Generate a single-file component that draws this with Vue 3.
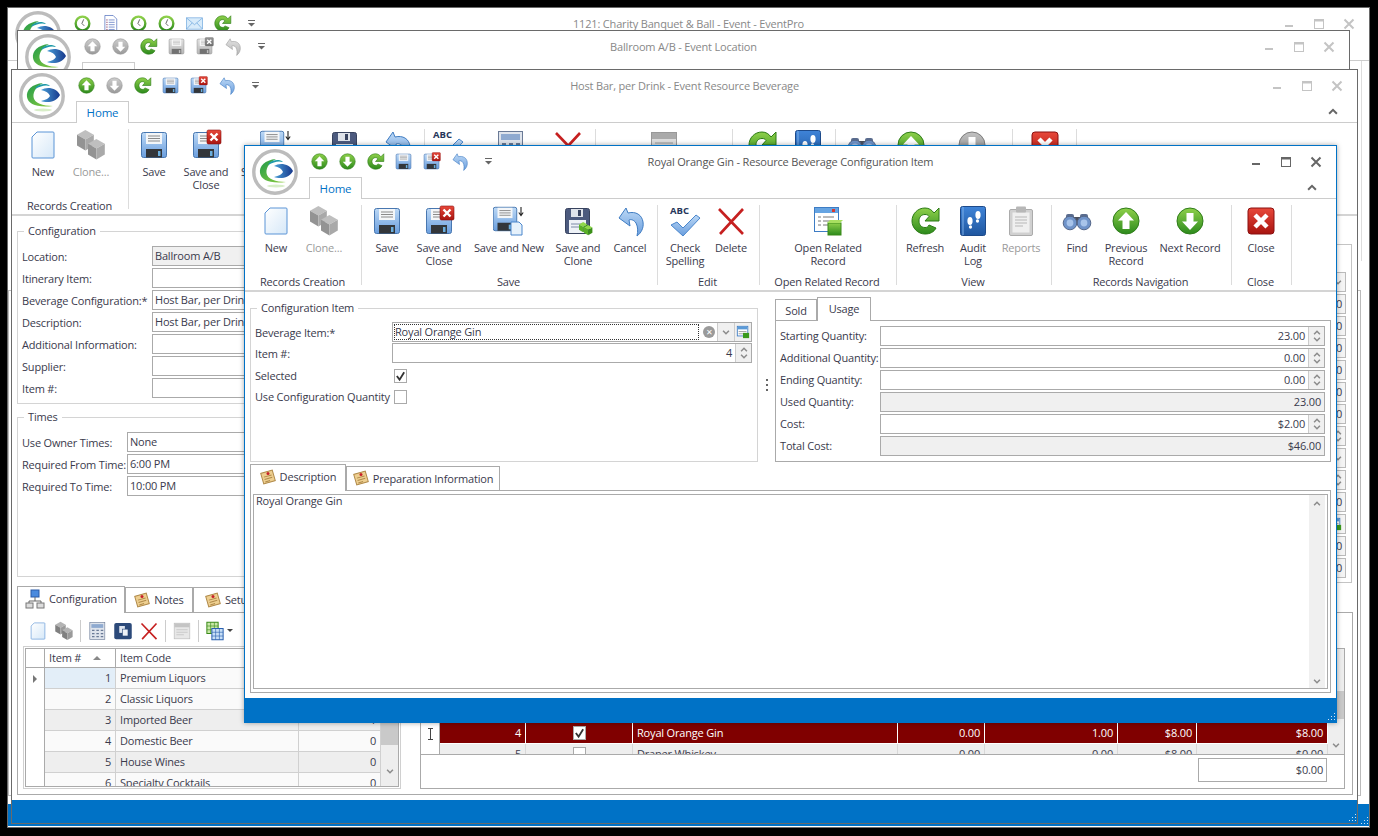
<script setup>
const ribbonFront = [
  { label: 'Records Creation', w: 112, items: [
    { icon: 'new', lines: ['New'], w: 52 },
    { icon: 'clone', lines: ['Clone...'], w: 44, off: true },
  ] },
  { label: 'Save', w: 296, items: [
    { icon: 'save', lines: ['Save'], w: 50 },
    { icon: 'saveClose', lines: ['Save and', 'Close'], w: 54 },
    { icon: 'saveNew', lines: ['Save and New'], w: 86 },
    { icon: 'saveClone', lines: ['Save and', 'Clone'], w: 52 },
    { icon: 'cancel', lines: ['Cancel'], w: 52 },
  ] },
  { label: 'Edit', w: 102, items: [
    { icon: 'spell', lines: ['Check', 'Spelling'], w: 54 },
    { icon: 'delete', lines: ['Delete'], w: 38 },
  ] },
  { label: 'Open Related Record', w: 137, items: [
    { icon: 'related', lines: ['Open Related', 'Record'], w: 136 },
  ] },
  { label: 'View', w: 155, items: [
    { icon: 'refresh', lines: ['Refresh'], w: 56 },
    { icon: 'audit', lines: ['Audit', 'Log'], w: 40 },
    { icon: 'reports', lines: ['Reports'], w: 56, off: true },
  ] },
  { label: 'Records Navigation', w: 180, items: [
    { icon: 'find', lines: ['Find'], w: 50 },
    { icon: 'up', lines: ['Previous', 'Record'], w: 48 },
    { icon: 'down', lines: ['Next Record'], w: 80 },
  ] },
  { label: 'Close', w: 60, items: [
    { icon: 'closeBig', lines: ['Close'], w: 58 },
  ] },
]

const ribbonBeverage = [
  { label: 'Records Creation', w: 112, items: [
    { icon: 'new', lines: ['New'], w: 52 },
    { icon: 'clone', lines: ['Clone...'], w: 44, off: true },
  ] },
  { label: 'Save', w: 296, items: [
    { icon: 'save', lines: ['Save'], w: 50 },
    { icon: 'saveClose', lines: ['Save and', 'Close'], w: 54 },
    { icon: 'saveNew', lines: ['Save and New'], w: 86 },
    { icon: 'saveClone', lines: ['Save and', 'Clone'], w: 52 },
    { icon: 'cancel', lines: ['Cancel'], w: 52 },
  ] },
  { label: 'Edit', w: 171, items: [
    { icon: 'spell', lines: ['Check', 'Spelling'], w: 46 },
    { icon: 'calc', lines: ['Calculate'], w: 78 },
    { icon: 'delete', lines: ['Delete'], w: 38 },
  ] },
  { label: 'Open Related Record', w: 137, items: [
    { icon: 'form', lines: ['Open Related', 'Record'], w: 136 },
  ] },
  { label: 'View', w: 103, items: [
    { icon: 'refresh', lines: ['Refresh'], w: 58 },
    { icon: 'audit', lines: ['Audit', 'Log'], w: 34 },
  ] },
  { label: 'Records Navigation', w: 177, items: [
    { icon: 'find', lines: ['Find'], w: 52 },
    { icon: 'up', lines: ['Previous', 'Record'], w: 46 },
    { icon: 'down', lines: ['Next Record'], w: 76, off: true },
  ] },
  { label: 'Close', w: 64, items: [
    { icon: 'closeBig', lines: ['Close'], w: 64 },
  ] },
]

const windows = [
  {
    id: 'w1', title: '1121: Charity Banquet & Ball - Event - EventPro',
    qat: [{ icon: 'clock' }, { icon: 'doclist' }, { icon: 'clock' }, { icon: 'clock' }, { icon: 'mail' }, { icon: 'refresh' }],
  },
  {
    id: 'w2', title: 'Ballroom A/B - Event Location',
    qat: [{ icon: 'up', off: true }, { icon: 'down', off: true }, { icon: 'refresh' }, { icon: 'save', off: true }, { icon: 'saveClose', off: true }, { icon: 'cancel', off: true }],
  },
  {
    id: 'w3', title: 'Host Bar, per Drink - Event Resource Beverage', ribbon: ribbonBeverage,
    qat: [{ icon: 'up' }, { icon: 'down', off: true }, { icon: 'refresh' }, { icon: 'save' }, { icon: 'saveClose' }, { icon: 'cancel' }],
  },
  {
    id: 'w4', title: 'Royal Orange Gin - Resource Beverage Configuration Item', ribbon: ribbonFront,
    qat: [{ icon: 'up' }, { icon: 'down' }, { icon: 'refresh' }, { icon: 'save' }, { icon: 'saveClose' }, { icon: 'cancel' }],
  },
]

const configRows = [
  { label: 'Location:', value: 'Ballroom A/B', readonly: true },
  { label: 'Itinerary Item:', value: '' },
  { label: 'Beverage Configuration:*', value: 'Host Bar, per Drink' },
  { label: 'Description:', value: 'Host Bar, per Drink' },
  { label: 'Additional Information:', value: '' },
  { label: 'Supplier:', value: '' },
  { label: 'Item #:', value: '' },
]
const timeRows = [
  { label: 'Use Owner Times:', value: 'None' },
  { label: 'Required From Time:', value: '6:00 PM' },
  { label: 'Required To Time:', value: '10:00 PM' },
]
const sideRows = ['chevron', '0', '0', '0', '0', '0', '0', 'spin', 'chevron', 'spin', '0', 'pick', '0', '0']

const configGrid = [
  { n: 1, code: 'Premium Liquors', qty: 0, current: true },
  { n: 2, code: 'Classic Liquors', qty: 0 },
  { n: 3, code: 'Imported Beer', qty: 1, alt: true },
  { n: 4, code: 'Domestic Beer', qty: 0 },
  { n: 5, code: 'House Wines', qty: 0, alt: true },
  { n: 6, code: 'Specialty Cocktails', qty: 0 },
]
const itemGrid = [
  { n: 4, on: true, name: 'Royal Orange Gin', a: '0.00', b: '1.00', c: '$8.00', d: '$8.00', picked: true },
  { n: 5, on: false, name: 'Draper Whiskey', a: '0.00', b: '0.00', c: '$8.00', d: '$0.00' },
]
const toolbar = ['new', 'clone', '|', 'calc', 'copy', 'delete', '|', 'form', '|', 'views']

const usageRows = [
  { label: 'Starting Quantity:', value: '23.00', spin: true },
  { label: 'Additional Quantity:', value: '0.00', spin: true },
  { label: 'Ending Quantity:', value: '0.00', spin: true },
  { label: 'Used Quantity:', value: '23.00' },
  { label: 'Cost:', value: '$2.00', spin: true },
  { label: 'Total Cost:', value: '$46.00' },
]
</script>

<template>
  <div class="desktop">
    <svg class="sprite" width="0" height="0">
      <defs>
        <linearGradient id="gGreen" x1="0" y1="0" x2="0" y2="1"><stop offset="0" stop-color="#8ed04a" /><stop offset="1" stop-color="#2c8a1c" /></linearGradient>
        <linearGradient id="gBlue" x1="0" y1="0" x2="0" y2="1"><stop offset="0" stop-color="#bcd8f5" /><stop offset="1" stop-color="#6a9ede" /></linearGradient>
        <linearGradient id="gBook" x1="0" y1="0" x2="0" y2="1"><stop offset="0" stop-color="#3f84d8" /><stop offset="1" stop-color="#1f569f" /></linearGradient>
        <linearGradient id="gRed" x1="0" y1="0" x2="0" y2="1"><stop offset="0" stop-color="#e8483a" /><stop offset="1" stop-color="#a81410" /></linearGradient>
        <linearGradient id="gSky" x1="0" y1="0" x2="1" y2="1"><stop offset="0" stop-color="#ffffff" /><stop offset="1" stop-color="#d6e8f8" /></linearGradient>
        <linearGradient id="gLogo" x1="0" y1="0" x2="1" y2="1"><stop offset="0" stop-color="#1f9a4a" /><stop offset="1" stop-color="#8fce3e" /></linearGradient>
        <linearGradient id="gEye" x1="0" y1="0" x2="1" y2="0"><stop offset="0" stop-color="#4aa0d8" /><stop offset="1" stop-color="#17388c" /></linearGradient>
        <g id="cubeGray">
          <polygon points="7,0 14,4 7,8 0,4" fill="#b4b4b4" />
          <polygon points="0,4 7,8 7,17 0,13" fill="#808080" />
          <polygon points="7,8 14,4 14,13 7,17" fill="#9a9a9a" />
        </g>
        <g id="cubeGreen">
          <polygon points="7,0 14,4 7,8 0,4" fill="#8fd84a" />
          <polygon points="0,4 7,8 7,17 0,13" fill="#5bb028" />
          <polygon points="7,8 14,4 14,13 7,17" fill="#3a8f18" />
        </g>
      </defs>
      <symbol id="logo" viewBox="0 0 46 46">
        <circle cx="23" cy="23" r="21.2" fill="#fff" stroke="#bcbcbc" stroke-width="3.4" />
        <path d="M24 10C13 11 7 17 8 24c1 7 10 11 26 9-10 0-19-3-19.500-9C14 18 18 13 24 10z" fill="url(#gLogo)" />
        <path d="M17 14c4-3.500 11-4 14-1-5-1.500-9 0-15 3z" fill="#1f9aa8" />
        <path d="M22 17c6-4 16-2 19 5-4 8-14 8-19 6 5-1 8-3 9-5-1-3-4-5-9-6z" fill="url(#gEye)" />
        <ellipse cx="24" cy="37" rx="9" ry="1.500" fill="#d8eec8" />
      </symbol>
      <symbol id="up" viewBox="0 0 32 32">
        <circle cx="16" cy="16" r="13" fill="url(#gGreen)" stroke="#2f7d1a" />
        <path d="M16 7l8 8.500h-4.500V24h-7v-8.500H8z" fill="#fff" />
      </symbol>
      <symbol id="down" viewBox="0 0 32 32">
        <circle cx="16" cy="16" r="13" fill="url(#gGreen)" stroke="#2f7d1a" />
        <path d="M16 25l8-8.500h-4.500V8h-7v8.500H8z" fill="#fff" />
      </symbol>
      <symbol id="new" viewBox="0 0 32 32">
        <path d="M10 3h16a1 1 0 0 1 1 1v24a1 1 0 0 1-1 1H6a1 1 0 0 1-1-1V8z" fill="url(#gSky)" stroke="#5a94d6" />
      </symbol>
      <symbol id="clone" viewBox="0 0 32 32">
        <use href="#cubeGray" transform="translate(2 1) scale(1.2)" />
        <use href="#cubeGray" transform="translate(13 10) scale(1.2)" />
      </symbol>
      <symbol id="floppy" viewBox="0 0 32 32">
        <rect x="3.500" y="3.500" width="25" height="25" rx="2" fill="url(#gBlue)" stroke="#4877b0" />
        <rect x="8" y="4" width="16" height="11" fill="#f4f6f8" />
        <path d="M10 7h12M10 9.500h12M10 12h12" stroke="#8a8a8a" />
        <rect x="8" y="20" width="16" height="8.500" fill="#33363a" />
        <rect x="20" y="22" width="2.500" height="5" fill="#6aaede" />
      </symbol>
      <symbol id="save" viewBox="0 0 32 32"><use href="#floppy" width="32" height="32" /></symbol>
      <symbol id="saveClose" viewBox="0 0 32 32">
        <use href="#floppy" width="32" height="32" />
        <rect x="17" y="1" width="14" height="14" rx="1.500" fill="url(#gRed)" stroke="#8a1010" stroke-width=".6" />
        <path d="M20.500 4.500l7 7m0-7l-7 7" stroke="#fff" stroke-width="2.400" />
      </symbol>
      <symbol id="saveNew" viewBox="0 0 32 32">
        <use href="#floppy" x="-3" y="-1" width="30" height="30" />
        <path d="M18 17h8l3 3v10H18z" fill="#e6f1fb" stroke="#4a86cc" />
        <path d="M28 2v8m-2.200-2.500l2.200 3 2.200-3" fill="none" stroke="#222" stroke-width="1.100" />
      </symbol>
      <symbol id="saveClone" viewBox="0 0 32 32">
        <rect x="3.500" y="3.500" width="24" height="25" rx="2" fill="#4c5a7e" stroke="#38435f" />
        <rect x="9" y="4" width="12" height="8" fill="#dfe3ea" />
        <rect x="16" y="5" width="3" height="6" fill="#38435f" />
        <rect x="7" y="15" width="17" height="13" fill="#eef2f7" />
        <path d="M9 19h12M9 22h9" stroke="#7a8aa6" />
        <use href="#cubeGreen" transform="translate(17 17) scale(.6)" />
        <use href="#cubeGreen" transform="translate(22 20) scale(.6)" />
      </symbol>
      <symbol id="cancel" viewBox="0 0 32 32">
        <path d="M5 13l7-10 2 5c8-2 14 2 15 9 1 6-2 11-6 14 1-5 1-9-1-13-2-3-5-4-7-3l1 6z" fill="url(#gBlue)" stroke="#3f7cc2" stroke-linejoin="round" />
      </symbol>
      <symbol id="spell" viewBox="0 0 32 32">
        <text x="1" y="9" font-family="'Open Sans', sans-serif" font-weight="700" font-size="9.500" letter-spacing="0" fill="#26365a">ABC</text>
        <path d="M2 20l6-3 6 6L27 10l4 3-17 18z" fill="url(#gBlue)" stroke="#4a86cc" />
      </symbol>
      <symbol id="delete" viewBox="0 0 32 32">
        <path d="M4 4l24 25M28 4L5 29" stroke="#c62020" stroke-width="2.600" fill="none" />
      </symbol>
      <symbol id="related" viewBox="0 0 32 32">
        <rect x="2.500" y="2.500" width="24" height="24" fill="#fff" stroke="#3d7cc4" />
        <rect x="3" y="3" width="23" height="5" fill="#66a4e2" />
        <rect x="20" y="4" width="3" height="3" fill="#d83a30" />
        <path d="M6 12h3m2 0h11M6 16h3m2 0h8M6 20h3m2 0h6" stroke="#777" />
        <rect x="16" y="18" width="13" height="12" fill="url(#gGreen)" stroke="#3a8a18" />
        <path d="M16 18l3-3h13l-3 3z" transform="translate(-1 0)" fill="#a8e060" />
      </symbol>
      <symbol id="form" viewBox="0 0 32 32">
        <rect x="3.500" y="3.500" width="25" height="25" fill="#ddd" stroke="#999" />
        <rect x="4" y="4" width="24" height="6" fill="#aaa" />
        <path d="M7 14h18M7 18h18M7 22h12" stroke="#999" />
      </symbol>
      <symbol id="calc" viewBox="0 0 32 32">
        <rect x="4.500" y="2.500" width="24" height="27" fill="#dfe4ec" stroke="#6a7a96" />
        <rect x="7" y="5" width="19" height="6" fill="#8faad0" />
        <path d="M8 15h4m3 0h4m3 0h4M8 20h4m3 0h4m3 0h4M8 25h4m3 0h4m3 0h4" stroke="#6a7a96" stroke-width="2" />
      </symbol>
      <symbol id="refresh" viewBox="0 0 32 32">
        <path d="M16 3C8.500 3 3 9 3 16s6 13 13 13c5 0 9-2 11-6l-7-3c-1 2-2 2.500-4 2.500-3.500 0-6-2.500-6-6.500s2.500-6.500 6-6.500c2 0 3 .5 4 2l-4 4.500h14V3l-5 5c-2-3-5-5-9-5z" fill="url(#gGreen)" stroke="#2a7a14" />
      </symbol>
      <symbol id="audit" viewBox="0 0 32 32">
        <rect x="3.500" y="1.500" width="25" height="29" rx="2" fill="url(#gBook)" stroke="#1d4a8a" />
        <path d="M6 2v28" stroke="#7fb0e8" />
        <ellipse cx="13" cy="16" rx="2.600" ry="4" fill="#fff" />
        <ellipse cx="13.500" cy="22" rx="1.600" ry="1.700" fill="#fff" />
        <ellipse cx="21" cy="10" rx="2.600" ry="4" fill="#fff" />
        <ellipse cx="20.500" cy="16" rx="1.600" ry="1.700" fill="#fff" />
      </symbol>
      <symbol id="reports" viewBox="0 0 32 32">
        <rect x="4.500" y="4.500" width="23" height="26" rx="1.500" fill="#c8c8c8" stroke="#9c9c9c" />
        <rect x="7.500" y="7.500" width="17" height="20" fill="#ececec" />
        <rect x="11" y="1.500" width="10" height="6" rx="1" fill="#aaa" />
        <path d="M10 12h12M10 15h12M10 18h12M10 21h8" stroke="#aaa" />
      </symbol>
      <symbol id="find" viewBox="0 0 32 32">
        <rect x="5" y="9" width="8" height="6" rx="2" fill="#5a6c8e" />
        <rect x="19" y="9" width="8" height="6" rx="2" fill="#5a6c8e" />
        <rect x="12" y="12" width="8" height="8" fill="#4a4f5c" />
        <circle cx="9" cy="18" r="6.800" fill="#6f93c9" stroke="#56688a" />
        <circle cx="23" cy="18" r="6.800" fill="#6f93c9" stroke="#56688a" />
        <circle cx="9" cy="18" r="3.400" fill="#a8c4ea" />
        <circle cx="23" cy="18" r="3.400" fill="#a8c4ea" />
      </symbol>
      <symbol id="closeBig" viewBox="0 0 32 32">
        <rect x="3" y="3" width="26" height="26" rx="3" fill="url(#gRed)" stroke="#8a1010" />
        <path d="M10 10l12 12m0-12L10 22" stroke="#fff" stroke-width="4.500" />
      </symbol>
      <symbol id="clock" viewBox="0 0 32 32">
        <circle cx="16" cy="16" r="11.500" fill="#fff" stroke="url(#gGreen)" stroke-width="4" />
        <path d="M18 9l-3 7 4 4" fill="none" stroke="#555" stroke-width="1.500" />
      </symbol>
      <symbol id="doclist" viewBox="0 0 32 32">
        <path d="M6.500 2.500h14l6 6v21h-20z" fill="#fff" stroke="#2a50b0" />
        <path d="M9 10h2m2 0h10M9 14h2m2 0h10M9 18h2m2 0h10M9 22h2m2 0h10M9 26h2m2 0h10" stroke="#2a50b0" />
        <path d="M9 10h2M9 14h2M9 18h2M9 22h2M9 26h2" stroke="#d83a30" />
      </symbol>
      <symbol id="mail" viewBox="0 0 32 32">
        <rect x="2.500" y="6.500" width="27" height="19" fill="#d8ebfa" stroke="#5a9ad8" />
        <path d="M3 7l13 11L29 7M3 25l9-10m17 10l-9-10" fill="none" stroke="#5a9ad8" />
      </symbol>
      <symbol id="note" viewBox="0 0 16 16">
        <g transform="rotate(-16 8 8)">
          <rect x="2" y="2.500" width="12" height="11" fill="#eecf90" stroke="#b08a4a" />
          <path d="M4 7h8M4 9.500h8M4 12h5" stroke="#b08a4a" />
        </g>
        <circle cx="8" cy="4.500" r="1.500" fill="#c8202a" />
      </symbol>
      <symbol id="tree" viewBox="0 0 20 20">
        <rect x="6" y="1" width="8" height="7" fill="#4a8ade" stroke="#2a5aa8" />
        <path d="M10 8v4M4 12h12M4 12v2m12-2v2" stroke="#666" fill="none" />
        <rect x="1" y="14" width="7" height="5" fill="#ddd" stroke="#777" />
        <rect x="12" y="14" width="7" height="5" fill="#ddd" stroke="#777" />
      </symbol>
      <symbol id="copy" viewBox="0 0 32 32">
        <rect x="2" y="3" width="28" height="26" rx="3" fill="#2c4a7a" />
        <rect x="10" y="8" width="9" height="11" fill="#dfe6f0" />
        <rect x="15" y="13" width="9" height="11" fill="#eef2f7" stroke="#2c4a7a" />
      </symbol>
      <symbol id="views" viewBox="0 0 32 32">
        <rect x="3" y="2" width="18" height="18" fill="#c8e8a8" stroke="#3a8a18" stroke-width="1.600" />
        <path d="M3 8h18M3 14h18M9 2v18M15 2v18" stroke="#3a8a18" />
        <rect x="11" y="12" width="18" height="18" fill="#c8dff6" stroke="#2a60b0" stroke-width="1.600" />
        <path d="M11 18h18M11 24h18M17 12v18M23 12v18" stroke="#2a60b0" />
      </symbol>
      <symbol id="pick" viewBox="0 0 16 16">
        <rect x="1.500" y="1.500" width="12" height="11" fill="#fff" stroke="#3d7cc4" />
        <rect x="2" y="2" width="11" height="3" fill="#5a9ad8" />
        <path d="M3 7.500h9M3 10h9" stroke="#999" />
        <rect x="8" y="9" width="7" height="6" fill="#3a9a1c" />
      </symbol>
      <symbol id="chevUp" viewBox="0 0 9 6"><path d="M1 5l3.500-3.500L8 5" fill="none" stroke="currentColor" stroke-width="1.800" /></symbol>
      <symbol id="chevDown" viewBox="0 0 9 6"><path d="M1 1l3.500 3.500L8 1" fill="none" stroke="currentColor" stroke-width="1.800" /></symbol>
      <symbol id="winMin" viewBox="0 0 12 12"><path d="M2 8h8" stroke="currentColor" stroke-width="2" /></symbol>
      <symbol id="winMax" viewBox="0 0 12 12"><rect x="1.500" y="1.500" width="9" height="9" fill="none" stroke="currentColor" /><path d="M1 2.500h10" stroke="currentColor" stroke-width="2" /></symbol>
      <symbol id="winClose" viewBox="0 0 12 12"><path d="M1.500 1.500l9 9m0-9l-9 9" stroke="currentColor" stroke-width="2" /></symbol>
      <symbol id="qatMore" viewBox="0 0 9 7"><path d="M1 .5h7" stroke="#666" /><path d="M1 3h7L4.500 6.500z" fill="#666" /></symbol>
      <symbol id="grip" viewBox="0 0 10 10">
        <path d="M8 1h1v1H8zM5 4h1v1H5zM8 4h1v1H8zM2 7h1v1H2zM5 7h1v1H5zM8 7h1v1H8z" fill="#cfe2f3" />
      </symbol>
      <symbol id="ibeam" viewBox="0 0 7 12"><path d="M1 .5h5M1 11.500h5M3.500 1v10" stroke="#444" fill="none" /></symbol>
    </svg>

    <section v-for="win in windows" :key="win.id" class="window" :class="win.id">
      <svg class="logo"><use href="#logo" /></svg>

      <header class="titlebar">
        <div class="qat">
          <svg v-for="(q, i) in win.qat" :key="i" class="qat-icon" :class="{ off: q.off }"><use :href="'#' + q.icon" /></svg>
          <svg class="qat-more"><use href="#qatMore" /></svg>
        </div>
        <div class="title">{{ win.title }}</div>
        <div class="win-buttons">
          <svg><use href="#winMin" /></svg>
          <svg><use href="#winMax" /></svg>
          <svg><use href="#winClose" /></svg>
        </div>
      </header>

      <div class="tabstrip">
        <div class="home-tab">Home</div>
        <svg v-if="win.ribbon" class="collapse"><use href="#chevUp" /></svg>
      </div>

      <div v-if="win.ribbon" class="ribbon">
        <div v-for="group in win.ribbon" :key="group.label" class="ribbon-group" :style="{ width: group.w + 'px' }">
          <div class="ribbon-buttons">
            <div
              v-for="item in group.items"
              :key="item.icon"
              class="ribbon-button"
              :class="{ off: item.off }"
              :style="{ width: item.w + 'px' }"
            >
              <svg class="ribbon-icon"><use :href="'#' + item.icon" /></svg>
              <span v-for="line in item.lines" :key="line">{{ line }}</span>
            </div>
          </div>
          <div class="group-label">{{ group.label }}</div>
        </div>
      </div>

      <!-- back window: only the edges stick out -->
      <div v-if="win.id === 'w1'" class="w1-body">
        <div class="w1-upper"></div>
        <div class="w1-lower"></div>
      </div>

      <!-- event resource beverage -->
      <div v-if="win.id === 'w3'" class="w3-body">
        <div class="w3-top">
          <div class="w3-left">
            <fieldset class="group config-group">
              <legend>Configuration</legend>
              <div class="form-rows">
                <div v-for="row in configRows" :key="row.label" class="w3-row config-row">
                  <label>{{ row.label }}</label>
                  <div class="input" :class="{ readonly: row.readonly }">{{ row.value }}</div>
                </div>
              </div>
            </fieldset>
            <fieldset class="group times-group">
              <legend>Times</legend>
              <div class="form-rows">
                <div v-for="row in timeRows" :key="row.label" class="w3-row times-row">
                  <label>{{ row.label }}</label>
                  <div class="input">{{ row.value }}</div>
                </div>
              </div>
            </fieldset>
          </div>
          <div class="side-box">
            <div v-for="(kind, i) in sideRows" :key="i" class="side-field">
              <span v-if="kind === '0'">0</span>
              <svg v-else-if="kind === 'chevron'" class="chev"><use href="#chevDown" /></svg>
              <svg v-else-if="kind === 'pick'" class="pick"><use href="#pick" /></svg>
              <span v-else class="spin-stack">
                <svg class="chev"><use href="#chevUp" /></svg>
                <svg class="chev"><use href="#chevDown" /></svg>
              </span>
            </div>
          </div>
        </div>

        <div class="tabs w3-tabs">
          <div class="tab active"><svg class="tab-tree"><use href="#tree" /></svg>Configuration</div>
          <div class="tab"><svg class="tab-note"><use href="#note" /></svg>Notes</div>
          <div class="tab"><svg class="tab-note"><use href="#note" /></svg>Setup</div>
        </div>
        <div class="w3-panel">
          <div class="w3-panel-left">
            <div class="toolbar">
              <template v-for="(t, i) in toolbar" :key="i">
                <span v-if="t === '|'" class="tool-sep"></span>
                <svg v-else class="tool-icon" :class="{ off: t === 'form' }"><use :href="'#' + t" /></svg>
              </template>
              <i class="tool-caret"></i>
            </div>
            <div class="grid-frame">
              <div class="config-grid">
                <div class="grid-body">
                  <div class="cfg-row cfg-head">
                    <span class="indicator"></span>
                    <span class="cell">Item #<i class="sort"></i></span>
                    <span class="cell">Item Code</span>
                    <span class="cell"></span>
                  </div>
                  <div v-for="row in configGrid" :key="row.n" class="cfg-row" :class="{ alt: row.alt }">
                    <span class="indicator"><i v-if="row.current" class="arrow"></i></span>
                    <span class="cell num" :class="{ current: row.current }">{{ row.n }}</span>
                    <span class="cell">{{ row.code }}</span>
                    <span class="cell num">{{ row.qty }}</span>
                  </div>
                </div>
                <div class="grid-scroll">
                  <div class="thumb"></div>
                  <svg class="chev"><use href="#chevDown" /></svg>
                </div>
              </div>
            </div>
          </div>
          <div class="w3-panel-right">
            <div class="items">
              <div class="items-rows">
                <div v-for="row in itemGrid" :key="row.n" class="item-row" :class="{ picked: row.picked }">
                  <span class="item-mark"><svg v-if="row.picked" class="ibeam"><use href="#ibeam" /></svg></span>
                  <span class="cell num">{{ row.n }}</span>
                  <span class="cell center"><i class="check" :class="{ on: row.on }"><svg v-if="row.on" viewBox="0 0 12 12"><path d="M2 6l3 4 5-8" fill="none" stroke="#333" stroke-width="2" /></svg></i></span>
                  <span class="cell">{{ row.name }}</span>
                  <span class="cell num">{{ row.a }}</span>
                  <span class="cell num">{{ row.b }}</span>
                  <span class="cell num">{{ row.c }}</span>
                  <span class="cell num">{{ row.d }}</span>
                </div>
              </div>
              <div class="items-scroll">
                <div class="items-thumb"></div>
                <svg class="chev"><use href="#chevDown" /></svg>
              </div>
            </div>
            <div class="items-foot"><div class="total">$0.00</div></div>
          </div>
        </div>
      </div>

      <!-- configuration item dialog -->
      <div v-if="win.id === 'w4'" class="w4-body">
        <div class="w4-top">
          <fieldset class="group item-group">
            <legend>Configuration Item</legend>
            <div class="item-form">
              <div class="item-row-form">
                <label>Beverage Item:*</label>
                <div class="input lookup">
                  <span class="focus-text">Royal Orange Gin</span>
                  <i class="clear">✕</i>
                  <span class="field-btn"><svg class="chev"><use href="#chevDown" /></svg></span>
                  <span class="field-btn"><svg class="pick"><use href="#pick" /></svg></span>
                </div>
              </div>
              <div class="item-row-form">
                <label>Item #:</label>
                <div class="input numeric">
                  <span class="value">4</span>
                  <span class="spin"><svg class="chev"><use href="#chevUp" /></svg><svg class="chev"><use href="#chevDown" /></svg></span>
                </div>
              </div>
              <div class="item-row-form flag first-flag">
                <label>Selected</label>
                <i class="check on"><svg viewBox="0 0 12 12"><path d="M2 6l3 4 5-8" fill="none" stroke="#333" stroke-width="2" /></svg></i>
              </div>
              <div class="item-row-form flag">
                <label>Use Configuration Quantity</label>
                <i class="check"></i>
              </div>
            </div>
          </fieldset>

          <div class="splitter"><i></i><i></i><i></i></div>

          <div class="usage">
            <div class="tabs usage-tabs">
              <div class="tab">Sold</div>
              <div class="tab active">Usage</div>
            </div>
            <div class="usage-panel">
              <div v-for="row in usageRows" :key="row.label" class="usage-row">
                <label>{{ row.label }}</label>
                <div class="input numeric" :class="{ readonly: !row.spin }">
                  <span class="value">{{ row.value }}</span>
                  <span v-if="row.spin" class="spin"><svg class="chev"><use href="#chevUp" /></svg><svg class="chev"><use href="#chevDown" /></svg></span>
                </div>
              </div>
            </div>
          </div>
        </div>

        <div class="tabs desc-tabs">
          <div class="tab active"><svg class="tab-note"><use href="#note" /></svg>Description</div>
          <div class="tab"><svg class="tab-note"><use href="#note" /></svg>Preparation Information</div>
        </div>
        <div class="desc-panel">
          <div class="desc-box">
            <div class="desc-text">Royal Orange Gin</div>
            <div class="desc-scroll">
              <svg class="chev"><use href="#chevUp" /></svg>
              <svg class="chev"><use href="#chevDown" /></svg>
            </div>
          </div>
        </div>
      </div>

      <footer v-if="win.id !== 'w2'" class="status">
        <svg class="grip"><use href="#grip" /></svg>
      </footer>
    </section>
  </div>
</template>

<style scoped>
.desktop {
  position: relative;
  width: 1378px;
  height: 836px;
  background: #000;
  overflow: hidden;
  font-family: "Open Sans", "Noto Sans", sans-serif;
  font-size: 11px;
  letter-spacing: -0.18px;
  color: #3a3a4c;
}

.sprite {
  position: absolute;
}

.window {
  position: absolute;
  isolation: isolate;
  box-sizing: border-box;
  display: flex;
  flex-direction: column;
  background: #fff;
  border: 1px solid #6a6a6a;
  overflow: hidden;
}

.w1 { left: 7px; top: 7px; width: 1363px; height: 821px; }
.w2 { left: 17px; top: 30px; width: 1333px; height: 300px; }
.w3 { left: 11px; top: 69px; width: 1347px; height: 755px; }
.w4 {
  left: 244px;
  top: 145px;
  width: 1093px;
  height: 578px;
  border-color: #0072c6;
  box-shadow: 0 0 5px rgba(0, 0, 0, 0.35);
}

.logo {
  position: absolute;
  left: 7px;
  top: 3px;
  width: 46px;
  height: 46px;
}

.titlebar {
  flex: none;
  height: 31px;
  display: grid;
  grid-template-columns: 1fr auto 1fr;
  align-items: center;
}

.qat {
  display: flex;
  align-items: center;
  padding-left: 60px;
}

.qat-icon {
  width: 19px;
  height: 19px;
  margin: 0 4.5px;
}

.qat-more {
  width: 9px;
  height: 7px;
  margin-left: 11px;
}

.title {
  color: #888;
  white-space: nowrap;
  margin-top: -1px;
}

.w4 .title {
  color: #555;
}

.win-buttons {
  display: flex;
  justify-content: flex-end;
  align-items: center;
  gap: 18px;
  padding-right: 14px;
  color: #c4c4c4;
}

.w4 .win-buttons {
  color: #666;
}

.win-buttons svg {
  width: 12px;
  height: 12px;
}

.tabstrip {
  flex: none;
  height: 21px;
  display: flex;
  align-items: center;
  justify-content: space-between;
  padding: 0 19px 0 64px;
}

.home-tab {
  box-sizing: border-box;
  position: relative;
  z-index: 1;
  width: 53px;
  height: 22px;
  margin-top: 1px;
  border: 1px solid #ccc;
  border-bottom: none;
  background: #fff;
  color: #0072c6;
  font-size: 11.5px;
  line-height: 21px;
  text-align: center;
}

.collapse {
  width: 10px;
  height: 7px;
  color: #666;
}

.ribbon {
  flex: none;
  box-sizing: border-box;
  height: 94px;
  display: flex;
  padding: 6px 0 0 5px;
  border-top: 1px solid #ccc;
  border-bottom: 2px solid #d4d4d4;
}

.ribbon-group {
  flex: none;
  box-sizing: border-box;
  height: 80px;
  display: flex;
  flex-direction: column;
  justify-content: space-between;
  border-right: 1px solid #dcdcdc;
}

.ribbon-group:first-child .group-label {
  padding-right: 6px;
}

.ribbon-buttons {
  display: flex;
}

.ribbon-button {
  flex: none;
  display: flex;
  flex-direction: column;
  align-items: center;
  line-height: 13px;
  white-space: nowrap;
}

.ribbon-button.off {
  color: #9a9a9a;
}

.ribbon-icon {
  width: 32px;
  height: 32px;
  margin-bottom: 4px;
}

.ribbon-button.off .ribbon-icon {
  filter: grayscale(1) opacity(0.85);
}

.off.qat-icon,
.off.tool-icon {
  filter: grayscale(1) opacity(0.7);
}

.group-label {
  line-height: 14px;
  margin-bottom: -4px;
  padding-right: 2px;
  text-align: center;
}

.status {
  flex: none;
  display: flex;
  justify-content: flex-end;
  align-items: flex-end;
  background: #0072c6;
}

.w1 .status { height: 22px; margin-bottom: 1px; }
.w3 .status { height: 23px; }
.w4 .status { height: 24px; }

.grip {
  width: 10px;
  height: 10px;
}

/* w1 */
.w1-body {
  flex: 1;
  display: flex;
  flex-direction: column;
  border-top: 1px solid #ccc;
}

.w1-upper {
  height: 200px;
  margin-right: 7px;
  border-right: 1px solid #ddd;
}

.w1-lower {
  flex: 1;
  margin: 29px 8px 8px 0;
  border: 1px solid #bbb;
}

/* shared form bits */
label {
  white-space: nowrap;
}

.group {
  margin: 0;
  padding: 0;
  min-width: 0;
  box-sizing: border-box;
  border: 1px solid #d4d4d4;
}

.group legend {
  margin-left: 6px;
  padding: 0 4px;
  font-size: 11px;
  line-height: 14px;
}

.input {
  box-sizing: border-box;
  height: 20px;
  border: 1px solid #aaa;
  background: #fff;
  line-height: 18px;
  padding-left: 2px;
  white-space: nowrap;
  overflow: hidden;
}

.input.readonly {
  background: #f0f0f0;
}

.chev {
  display: block;
  width: 8px;
  height: 5px;
  color: #8a8a8a;
}

.pick {
  display: block;
  width: 14px;
  height: 14px;
}

.check {
  box-sizing: border-box;
  display: inline-block;
  width: 13px;
  height: 14px;
  border: 1px solid #aaa;
  background: #fff;
}

.check svg {
  display: block;
  width: 11px;
  height: 12px;
}

.tabs {
  flex: none;
  display: flex;
  align-items: flex-end;
}

.tab {
  box-sizing: border-box;
  display: flex;
  align-items: center;
  justify-content: center;
  gap: 4px;
  border: 1px solid #aaa;
  border-bottom: none;
  background: #fff;
  white-space: nowrap;
}

.tab-note {
  width: 16px;
  height: 16px;
}

.tab-tree {
  width: 20px;
  height: 20px;
}

/* w3 */
.w3-body {
  flex: 1;
  min-height: 0;
  display: flex;
  flex-direction: column;
  padding: 0 4px 0 5px;
}

.w3-top {
  flex: none;
  height: 370px;
  display: flex;
  justify-content: space-between;
}

.w3-left {
  width: 700px;
  padding-top: 8px;
}

.form-rows {
  display: flex;
  flex-direction: column;
  gap: 2px;
  padding: 8px 4px 0;
}

.config-group { height: 180px; }
.times-group { height: 167px; margin-top: 6px; }

.w3-row {
  display: grid;
  align-items: center;
}

.config-row { grid-template-columns: 130px 1fr; }
.times-row { grid-template-columns: 105px 1fr; }

.side-box {
  box-sizing: border-box;
  width: 500px;
  height: 339px;
  margin: 28px 1px 0 0;
  padding: 27px 5px 0;
  border: 1px solid #c4c4c4;
  display: flex;
  flex-direction: column;
  gap: 2px;
}

.side-field {
  box-sizing: border-box;
  height: 20px;
  display: flex;
  align-items: center;
  justify-content: flex-end;
  padding-right: 3px;
  border: 1px solid #bbb;
  background: #f4f4f4;
  line-height: 18px;
}

.spin-stack {
  display: flex;
  flex-direction: column;
  gap: 2px;
}

.w3-tabs {
  height: 26px;
}

.w3-tabs .tab {
  height: 25px;
}

.w3-tabs .tab:nth-child(1) { width: 108px; height: 27px; padding-bottom: 3px; }
.w3-tabs .tab:nth-child(2) { width: 68px; padding-bottom: 1px; }
.w3-tabs .tab:nth-child(3) { width: 90px; padding: 0 0 1px 11px; justify-content: flex-start; }

.w3-tabs .tab.active {
  position: relative;
  z-index: 1;
  margin-bottom: -1px;
}

.w3-panel {
  flex: none;
  box-sizing: border-box;
  height: 183px;
  display: flex;
  justify-content: space-between;
  border: 1px solid #aaa;
  padding: 0 7px 0 5px;
}

.w3-panel-left {
  width: 378px;
}

.toolbar {
  box-sizing: border-box;
  height: 33px;
  display: flex;
  align-items: center;
  padding: 2px 0 0 2px;
}

.tool-icon {
  width: 20px;
  height: 20px;
  margin: 0 3px;
}

.tool-sep {
  width: 1px;
  height: 22px;
  margin: 0 3px;
  background: #ccc;
}

.tool-caret {
  margin-left: -1px;
  border-top: 3px solid #444;
  border-left: 3px solid transparent;
  border-right: 3px solid transparent;
}

.grid-frame {
  box-sizing: border-box;
  height: 143px;
  padding: 1px;
  border: 1px solid #d0d0d0;
}

.config-grid {
  box-sizing: border-box;
  height: 139px;
  display: flex;
  border: 1px solid #aaa;
  overflow: hidden;
}

.grid-body {
  flex: 1;
  min-width: 0;
}

.cfg-row {
  box-sizing: border-box;
  display: grid;
  grid-template-columns: 19px 71px 183px 1fr;
  height: 21px;
  line-height: 20px;
  background: #fafafa;
}

.cfg-row.alt {
  background: #eee;
}

.cfg-head {
  height: 19px;
  line-height: 18px;
  background: #fff;
  border-bottom: 1px solid #aaa;
}

.cell {
  box-sizing: border-box;
  padding: 0 4px;
  border-right: 1px solid #d0d0d0;
  border-bottom: 1px solid #d0d0d0;
  white-space: nowrap;
  overflow: hidden;
}

.cfg-head .cell {
  border-bottom: none;
  border-right-color: #aaa;
}

.cell.num {
  text-align: right;
}

.cell.center {
  text-align: center;
}

.cell.current {
  background: #e3eef8;
}

.indicator {
  display: flex;
  align-items: center;
  justify-content: center;
  background: #fff;
  border-right: 1px solid #aaa;
}

.arrow {
  border-left: 4px solid #777;
  border-top: 4px solid transparent;
  border-bottom: 4px solid transparent;
}

.sort {
  display: inline-block;
  margin-left: 12px;
  vertical-align: 2px;
  border-left: 4px solid transparent;
  border-right: 4px solid transparent;
  border-bottom: 4px solid #888;
}

.grid-scroll {
  flex: none;
  width: 17px;
  background: #eee;
  display: flex;
  flex-direction: column;
  align-items: center;
}

.thumb {
  align-self: stretch;
  height: 96px;
  background: #c9c9c9;
}

.grid-scroll .chev {
  margin-top: 24px;
}

.w3-panel-right {
  box-sizing: border-box;
  width: 925px;
  display: flex;
  flex-direction: column;
  margin-top: 35px;
  height: 141px;
  border: 1px solid #aaa;
}

.items {
  height: 106px;
  display: flex;
  box-sizing: border-box;
  border-bottom: 1px solid #aaa;
  overflow: hidden;
}

.items-rows {
  flex: none;
  width: 907px;
  padding-top: 74px;
}

.item-row {
  box-sizing: border-box;
  display: grid;
  grid-template-columns: 19px 86px 107px 265px 87px 133px 79px 131px;
  height: 21px;
  line-height: 20px;
  background: #eee;
}

.item-row .cell {
  border-color: #d8d8d8;
}

.item-row.picked .cell {
  background: #800000;
  color: #fff;
  border-color: #fff;
}

.item-row .check {
  margin-top: 3px;
}

.item-mark {
  display: flex;
  align-items: center;
  justify-content: center;
  background: #fff;
  border-right: 1px solid #aaa;
}

.ibeam {
  width: 7px;
  height: 12px;
}

.items-scroll {
  flex: 1;
  display: flex;
  flex-direction: column;
  align-items: center;
  background: #eee;
  padding-top: 42px;
}

.items-thumb {
  align-self: stretch;
  height: 28px;
  background: #c9c9c9;
}

.items-scroll .chev {
  margin-top: 24px;
}

.items-foot {
  flex: 1;
  display: flex;
  justify-content: flex-end;
  align-items: flex-start;
  padding: 3px 17px 0 0;
}

.total {
  box-sizing: border-box;
  width: 129px;
  height: 24px;
  border: 1px solid #aaa;
  line-height: 22px;
  text-align: right;
  padding-right: 3px;
}

/* w4 */
.w4-body {
  flex: 1;
  min-height: 0;
  display: flex;
  flex-direction: column;
  padding: 9px 5px 5px;
}

.w4-top {
  flex: none;
  height: 161px;
  display: flex;
  margin-bottom: 2px;
}

.item-group {
  flex: none;
  width: 508px;
}

.item-form {
  display: flex;
  flex-direction: column;
  gap: 1px;
  padding: 7px 5px 0 4px;
}

.item-row-form {
  display: grid;
  grid-template-columns: 137px 1fr;
  align-items: center;
  height: 20px;
}

.item-row-form.first-flag {
  margin-top: 2px;
}

.item-row-form.flag label {
  margin-top: -2px;
}

.item-row-form .check {
  margin-left: 2px;
}

.lookup {
  display: flex;
  align-items: center;
  padding: 1px 0 1px 1px;
}

.focus-text {
  flex: 1;
  height: 16px;
  line-height: 15px;
  padding-left: 1px;
  outline: 1px dotted #333;
  outline-offset: -1px;
}

.clear {
  width: 12px;
  height: 12px;
  margin: 0 2px 0 4px;
  border-radius: 50%;
  background: #9a9a9a;
  color: #fff;
  font-style: normal;
  font-size: 8px;
  line-height: 12px;
  text-align: center;
}

.field-btn {
  flex: none;
  width: 16px;
  height: 18px;
  margin: -1px 0;
  display: flex;
  align-items: center;
  justify-content: center;
  border-left: 1px solid #ccc;
  background: #f0f0f0;
}

.numeric {
  display: flex;
  align-items: center;
  justify-content: flex-end;
  padding: 0 3px 0 0;
}

.numeric .spin {
  flex: none;
  align-self: stretch;
  width: 15px;
  margin: 0 -3px 0 3px;
  display: flex;
  flex-direction: column;
  align-items: center;
  justify-content: center;
  gap: 2px;
  border-left: 1px solid #ccc;
  background: #f0f0f0;
}

.splitter {
  flex: none;
  width: 17px;
  display: flex;
  flex-direction: column;
  align-items: center;
  justify-content: center;
  gap: 3px;
  padding-top: 7px;
}

.splitter i {
  width: 2px;
  height: 2px;
  background: #666;
}

.usage {
  flex: 1;
  min-width: 0;
  display: flex;
  flex-direction: column;
  height: 161px;
}

.usage-tabs {
  height: 23px;
  margin-top: -4px;
}

.usage-tabs .tab {
  margin-bottom: -1px;
}

.usage-tabs .tab:nth-child(1) { width: 42px; height: 22px; }
.usage-tabs .tab:nth-child(2) { width: 54px; height: 24px; padding-bottom: 2px; position: relative; z-index: 1; }

.usage-panel {
  box-sizing: border-box;
  flex: 1;
  display: flex;
  flex-direction: column;
  gap: 2px;
  padding: 5px 5px 0 4px;
  border: 1px solid #aaa;
}

.usage-row {
  display: grid;
  grid-template-columns: 100px 1fr;
  align-items: center;
}

.usage-row label {
  margin-top: -2px;
}

.desc-tabs {
  height: 26px;
}

.desc-tabs .tab:nth-child(1) { width: 96px; height: 27px; padding-bottom: 3px; margin-bottom: -1px; position: relative; z-index: 1; }
.desc-tabs .tab:nth-child(2) { width: 154px; height: 24px; padding-bottom: 1px; }

.desc-panel {
  box-sizing: border-box;
  flex: 1;
  padding: 3px 2px;
  border: 1px solid #aaa;
}

.desc-box {
  box-sizing: border-box;
  height: 100%;
  display: flex;
  border: 1px solid #aaa;
}

.desc-text {
  flex: 1;
  padding: 0 2px;
  line-height: 12px;
}

.desc-scroll {
  flex: none;
  width: 16px;
  margin: 0 2px 0 0;
  padding: 6px 0 4px;
  display: flex;
  flex-direction: column;
  align-items: center;
  justify-content: space-between;
  background: #f0f0f0;
}
</style>
